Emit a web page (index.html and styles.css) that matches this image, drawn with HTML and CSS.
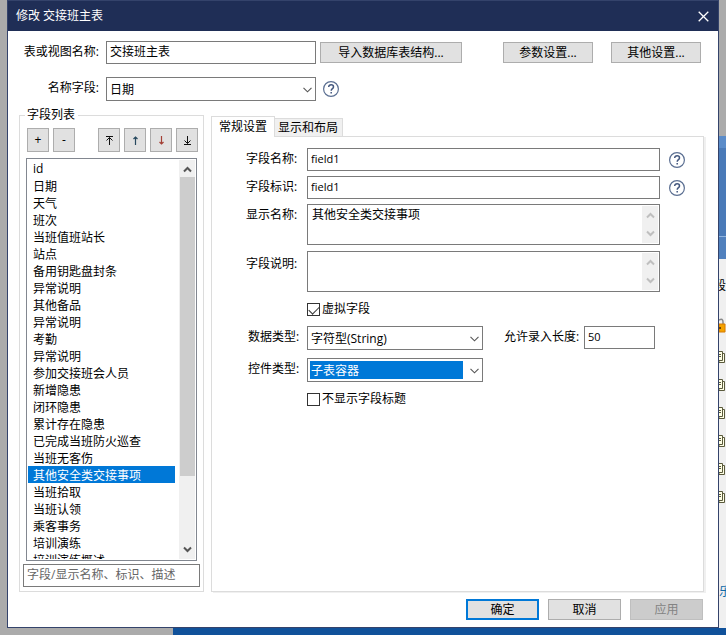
FILE: index.html
```html
<!DOCTYPE html>
<html lang="zh-CN">
<head>
<meta charset="UTF-8">
<meta name="viewport" content="width=device-width, initial-scale=1.0">
<title>修改 交接班主表</title>
<link rel="stylesheet" href="styles.css">
</head>
<body>
<!-- Shared icons -->
<svg class="sprite" aria-hidden="true">
<symbol id="help" viewBox="0 0 16 16"><circle cx="8" cy="8" r="7.4" fill="#fff" stroke="#5b6f92" stroke-width="1.2"/><path d="M5.7 6.1C5.7 4.6 6.7 3.8 8.1 3.8s2.4.8 2.4 2.1c0 1.7-2.3 1.8-2.3 3.9M8.2 11v1.6" fill="none" stroke="#44587f" stroke-width="1.5"/></symbol>
<symbol id="up" viewBox="0 0 9 7"><path d="M1 5.5 4.5 2 8 5.5" fill="none" stroke="currentColor" stroke-width="2"/></symbol>
<symbol id="down" viewBox="0 0 9 7"><path d="M1 1.5 4.5 5 8 1.5" fill="none" stroke="currentColor" stroke-width="2"/></symbol>
<symbol id="chevron" viewBox="0 0 9 6"><path d="M.5.8 4.5 4.8 8.5.8" fill="none" stroke="#555" stroke-width="1.1"/></symbol>
<symbol id="pages" viewBox="0 0 7 12"><path d="M3.5 2.5h2v9H0V9" fill="#ffffe6" stroke="#5a5a3c"/><path d="M-1 .5h4.500v9H-1z" fill="#ffffe6" stroke="#5a5a3c"/><path d="M0 3.500h2M0 5.500h2" stroke="#5a5a3c"/></symbol>
</svg>
<div class="desktop">
<div class="left-edge"></div>
<div class="dialog">
<div class="titlebar">
<span>修改 交接班主表</span>
<button type="button" class="close" aria-label="关闭"><svg width="11" height="11" viewBox="0 0 11 11"><path d="M.7.7 10.3 10.3M10.3.7.7 10.3" stroke="#fff" stroke-width="1.3"/></svg></button>
</div>
<form class="content">
<!-- Table settings -->
<div class="head-row">
<label for="tableName">表或视图名称:</label>
<input type="text" id="tableName" class="box" value="交接班主表">
<button type="button" class="btn import">导入数据库表结构...</button>
<div class="head-buttons">
<button type="button" class="btn">参数设置...</button>
<button type="button" class="btn">其他设置...</button>
</div>
</div>
<div class="head-row">
<label for="nameField">名称字段:</label>
<div class="dropdown name-field">
<select id="nameField" class="box"><option>日期</option></select>
<svg class="arrow"><use href="#chevron"/></svg>
</div>
<svg class="help"><use href="#help"/></svg>
</div>
<div class="main">
<!-- Field list -->
<fieldset class="fields">
<legend>字段列表</legend>
<div class="toolbar">
<button type="button" aria-label="添加">+</button>
<button type="button" aria-label="删除">-</button>
<span class="spacer"></span>
<button type="button" aria-label="移到最前"><svg viewBox="0 0 9 9"><path d="M1 .5h7M4.5 9V1.5M1.5 4.5l3-3 3 3" fill="none" stroke="#111"/></svg></button>
<button type="button" aria-label="上移"><svg viewBox="0 0 9 9"><path d="M4.5 9V1M2.5 3l2-2 2 2" fill="none" stroke="#27495f" stroke-width="1.2"/></svg></button>
<button type="button" aria-label="下移"><svg viewBox="0 0 9 9"><path d="M4.5 0v8M2.5 6l2 2 2-2" fill="none" stroke="#a33f35" stroke-width="1.2"/></svg></button>
<button type="button" aria-label="移到最后"><svg viewBox="0 0 9 9"><path d="M1 8.5h7M4.5 0v7.5M1.5 4.5l3 3 3-3" fill="none" stroke="#111"/></svg></button>
</div>
<div class="listbox">
<select size="10" aria-label="字段列表">
<option>id</option>
<option>日期</option>
<option>天气</option>
<option>班次</option>
<option>当班值班站长</option>
<option>站点</option>
<option>备用钥匙盘封条</option>
<option>异常说明</option>
<option>其他备品</option>
<option>异常说明</option>
<option>考勤</option>
<option>异常说明</option>
<option>参加交接班会人员</option>
<option>新增隐患</option>
<option>闭环隐患</option>
<option>累计存在隐患</option>
<option>已完成当班防火巡查</option>
<option>当班无客伤</option>
<option selected>其他安全类交接事项</option>
<option>当班拾取</option>
<option>当班认领</option>
<option>乘客事务</option>
<option>培训演练</option>
<option>培训演练概述</option>
</select>
<div class="scrollbar">
<svg><use href="#up"/></svg>
<div class="track"><div class="thumb"></div></div>
<svg><use href="#down"/></svg>
</div>
</div>
<input type="text" class="box search" aria-label="查找字段" placeholder="字段/显示名称、标识、描述">
</fieldset>
<!-- Field properties -->
<div class="tabs">
<div class="tab-row" role="tablist">
<button type="button" class="tab active" role="tab" aria-selected="true">常规设置</button>
<button type="button" class="tab" role="tab" aria-selected="false">显示和布局</button>
</div>
<div class="panel" role="tabpanel">
<div class="group">
<div class="row">
<label for="fieldName">字段名称:</label>
<input type="text" id="fieldName" class="box latin" value="field1">
<svg class="help"><use href="#help"/></svg>
</div>
<div class="row">
<label for="fieldKey">字段标识:</label>
<input type="text" id="fieldKey" class="box latin" value="field1">
<svg class="help"><use href="#help"/></svg>
</div>
<div class="row">
<label for="caption">显示名称:</label>
<div class="box memo">
<textarea id="caption">其他安全类交接事项</textarea>
<div class="scrollbar disabled"><svg><use href="#up"/></svg><svg><use href="#down"/></svg></div>
</div>
</div>
<div class="row note-row">
<label for="note">字段说明:</label>
<div class="box memo">
<textarea id="note"></textarea>
<div class="scrollbar disabled"><svg><use href="#up"/></svg><svg><use href="#down"/></svg></div>
</div>
</div>
</div>
<div class="group types">
<div class="check"><input type="checkbox" id="virtual" checked><label for="virtual">虚拟字段</label></div>
<div class="row">
<label for="dataType">数据类型:</label>
<div class="dropdown">
<select id="dataType" class="box"><option>字符型(String)</option></select>
<svg class="arrow"><use href="#chevron"/></svg>
</div>
<label for="maxLength" class="length-label">允许录入长度:</label>
<input type="text" id="maxLength" class="box latin length" value="50">
</div>
<div class="row">
<label for="controlType">控件类型:</label>
<div class="dropdown selected">
<select id="controlType" class="box"><option>子表容器</option></select>
<svg class="arrow"><use href="#chevron"/></svg>
</div>
</div>
<div class="check"><input type="checkbox" id="hideTitle"><label for="hideTitle">不显示字段标题</label></div>
</div>
</div>
</div>
</div>
<div class="footer">
<button type="submit" class="btn default">确定</button>
<button type="button" class="btn">取消</button>
<button type="button" class="btn" disabled>应用</button>
</div>
</form>
</div>
<!-- Edge of the window behind -->
<div class="behind">
<div class="behind-head"></div>
<div class="behind-bar"></div>
<div class="behind-list">
<span class="behind-text">段</span>
<svg class="lock" viewBox="0 0 7 15"><path d="M0 2q4-2 4 2v3" fill="none" stroke="#888" stroke-width="1.5"/><path d="M0 6h6v8H0z" fill="#f5a300" stroke="#d77a00"/><path d="M0 9h2v2H0z" fill="#764500"/></svg>
<svg class="pages"><use href="#pages"/></svg>
<svg class="pages"><use href="#pages"/></svg>
<svg class="pages"><use href="#pages"/></svg>
<svg class="pages"><use href="#pages"/></svg>
<svg class="pages"><use href="#pages"/></svg>
<svg class="pages"><use href="#pages"/></svg>
<span class="behind-link">乐</span>
</div>
</div>
</div>
<div class="taskbar"></div>
</body>
</html>
```
FILE: styles.css
```css
* {
  box-sizing: border-box;
}
body {
  margin: 0;
  min-height: 100vh;
  display: flex;
  flex-direction: column;
  background: #ababab;
  color: #000;
  font: 12px/16px "Open Sans", "Noto Sans CJK SC", sans-serif;
}
button, input, select, textarea {
  font: inherit;
  color: inherit;
  margin: 0;
}
svg {
  display: block;
  flex: none;
}
.sprite {
  position: absolute;
  width: 0;
  height: 0;
}
.desktop {
  flex: 1;
  display: flex;
}
.left-edge {
  width: 7px;
}
.taskbar {
  height: 7px;
  margin-left: 173px;
  background: #10519a;
}
/* Dialog window */
.dialog {
  flex: 1;
  min-width: 0;
  display: flex;
  flex-direction: column;
  background: #fff;
  border: 1px solid #34436b;
}
.titlebar {
  height: 30px;
  padding: 0 9px 0 8px;
  display: flex;
  align-items: center;
  justify-content: space-between;
  background: #1f2e56;
  color: #fff;
}
.close {
  padding: 0;
  border: 0;
  background: none;
}
.content {
  flex: 1;
  display: flex;
  flex-direction: column;
  padding: 10px 0 7px 11px;
}
.box {
  height: 23px;
  padding: 0 3px 3px;
  border: 1px solid #7a7a7a;
  border-radius: 0;
  background: #fff;
  outline: none;
}
.box.latin {
  font-size: 11px;
}
.btn {
  height: 21px;
  padding: 1px 0 0;
  border: 1px solid #adadad;
  background: #e1e1e1;
}
.help {
  width: 16px;
  height: 16px;
}
/* Top rows */
.head-row {
  display: flex;
  align-items: center;
  padding-right: 17px;
}
.head-row + .head-row {
  margin-top: 13px;
}
.head-row label {
  width: 80px;
  margin-right: 7px;
  padding-bottom: 2px;
  text-align: right;
}
.head-row .box {
  width: 210px;
}
.import {
  width: 142px;
  margin-left: 4px;
}
.head-buttons {
  display: flex;
  gap: 18px;
  margin-left: auto;
}
.head-buttons .btn {
  width: 90px;
}
.head-row .help {
  margin-left: 7px;
}
/* Drop-downs */
.dropdown {
  position: relative;
  width: 176px;
}
.dropdown.name-field {
  width: 210px;
}
.dropdown .box {
  display: block;
  width: 100%;
  height: 24px;
  padding: 1px 20px 0 3px;
  appearance: none;
}
.arrow {
  position: absolute;
  right: 4px;
  top: 10px;
  width: 9px;
  height: 6px;
  pointer-events: none;
}
.dropdown.selected .box {
  color: #fff;
  background: linear-gradient(#0078d7, #0078d7) no-repeat 2px 2px / calc(100% - 21px) 18px #fff;
}
/* Field list */
.main {
  flex: 1;
  display: flex;
  gap: 7px;
  margin: 6px 14px 7px 0;
}
.fields {
  width: 185px;
  min-width: 0;
  margin: 0;
  padding: 5px 3px 4px;
  border: 1px solid #dcdcdc;
  display: flex;
  flex-direction: column;
}
.fields legend {
  margin-left: 2px;
  padding: 0 3px 0 2px;
}
.toolbar {
  display: flex;
  gap: 4px;
  padding: 0 2px 0 4px;
  margin-bottom: 6px;
}
.toolbar button {
  width: 22px;
  height: 24px;
  padding: 0;
  border: 1px solid #adadad;
  background: #e1e1e1;
}
.toolbar svg {
  width: 9px;
  height: 9px;
  margin: auto;
}
.spacer {
  flex: 1;
}
.listbox {
  flex: 1;
  display: flex;
  margin: 0 3px 3px;
  padding: 1px;
  border: 1px solid #828790;
}
.listbox select {
  flex: 1;
  min-width: 0;
  height: 0;
  min-height: 100%;
  padding: 0;
  border: 0;
  border-radius: 0;
  background: #fff;
  outline: none;
  scrollbar-width: none;
}
.listbox option {
  height: 17px;
  min-height: 17px;
  margin-right: 4px;
  padding: 0 0 0 5px;
  line-height: 17px;
}
.listbox option:checked {
  background: linear-gradient(#0078d7, #0078d7);
  -webkit-text-fill-color: #fff;
}
.scrollbar {
  width: 16px;
  padding: 6px 0;
  display: flex;
  flex-direction: column;
  align-items: center;
  justify-content: space-between;
  background: #f0f0f0;
  color: #555;
}
.scrollbar svg {
  width: 9px;
  height: 7px;
}
.scrollbar.disabled {
  color: #bfbfbf;
}
.track {
  flex: 1;
  width: 15px;
  margin: 4px 0;
}
.thumb {
  height: 82%;
  background: #cdcdcd;
}
.search::placeholder {
  color: #666;
  opacity: 1;
}
/* Tabs */
.tabs {
  flex: 1;
  min-width: 0;
  display: flex;
  flex-direction: column;
  padding-top: 9px;
}
.tab-row {
  display: flex;
  align-items: flex-end;
  height: 20px;
}
.tab {
  height: 18px;
  padding: 1px 4px 0 3px;
  border: 1px solid #dcdcdc;
  border-left: 0;
  border-bottom: 0;
  background: #f0f0f0;
}
.tab.active {
  position: relative;
  height: 21px;
  margin-bottom: -1px;
  padding: 0 7px;
  border-left: 1px solid #dcdcdc;
  background: #fff;
}
.panel {
  flex: 1;
  padding: 11px 18px 11px 34px;
  border: 1px solid #dcdcdc;
  box-shadow: 2px 1px #f0f0f0;
}
.group {
  display: flex;
  flex-direction: column;
  gap: 5px;
}
.types {
  gap: 8px;
  margin-top: 8px;
}
.row {
  display: flex;
}
.row label {
  width: 61px;
  padding-top: 3px;
}
.note-row {
  margin-top: 1px;
}
.note-row label {
  padding-top: 5px;
}
.types .row label {
  padding-left: 2px;
}
.row > input {
  flex: 1;
  min-width: 0;
}
.row .help {
  margin: 4px 0 0 9px;
}
.memo {
  flex: 1;
  display: flex;
  height: 41px;
  margin-right: 25px;
  padding: 1px;
}
.memo textarea {
  flex: 1;
  min-width: 0;
  padding: 1px 4px 0 3px;
  border: 0;
  outline: none;
  resize: none;
  overflow: hidden;
}
.types .row .length-label {
  width: 80px;
  margin-left: 21px;
  padding-left: 0;
}
.row .length {
  flex: none;
  width: 71px;
}
.check {
  display: flex;
  align-items: center;
  gap: 2px;
  height: 18px;
  padding-left: 61px;
}
.check input {
  appearance: none;
  width: 13px;
  height: 13px;
  border: 1px solid #333;
  background: #fff;
}
.check input:checked::before {
  content: "";
  display: block;
  width: 9px;
  height: 5px;
  margin: 2px 1px;
  border: solid #333;
  border-width: 0 0 1px 1px;
  transform: rotate(-45deg);
}
/* Footer buttons */
.footer {
  display: flex;
  justify-content: flex-end;
  gap: 9px;
  padding-right: 15px;
}
.footer .btn {
  width: 73px;
}
.footer .default {
  border: 2px solid #0078d7;
}
.btn:disabled {
  color: #838383;
  background: #ccc;
  border-color: #bfbfbf;
}
/* Window behind the dialog */
.behind {
  width: 7px;
  padding-top: 136px;
  display: flex;
  flex-direction: column;
  overflow: hidden;
}
.behind-head {
  height: 100px;
  background: #4a7ab8;
  border-top: 12px solid #5b8cc9;
}
.behind-bar {
  height: 23px;
  background: #5080bd;
  border-top: 1px solid #90b4df;
}
.behind-list {
  flex: 1;
  display: flex;
  flex-direction: column;
  padding-top: 19px;
  background: #f0f0f0;
}
.behind-text {
  height: 16px;
  margin-bottom: 24px;
  text-indent: -5px;
}
.lock {
  width: 7px;
  height: 15px;
  margin-bottom: 18px;
}
.pages {
  width: 7px;
  height: 12px;
  margin-bottom: 16px;
}
.behind-link {
  height: 16px;
  margin: auto 0 28px;
  color: #0d6aa8;
}
```
